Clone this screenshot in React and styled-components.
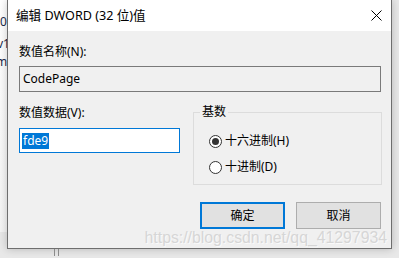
import React from "react"
import styled, { createGlobalStyle } from "styled-components"

const GlobalStyle = createGlobalStyle`
  html, body {
    margin: 0;
    padding: 0;
    background: #e8e8e8;
  }
  body {
    font-family: "Noto Sans", "Noto Sans CJK SC", sans-serif;
  }
`

const Page = styled.div`
  position: relative;
  width: 399px;
  height: 258px;
  overflow: hidden;
  display: flex;
  background: #e8e8e8;
`

// bit of the window behind the dialog
const BehindWindow = styled.div`
  width: 7px;
  height: 232px;
  flex: none;
  overflow: hidden;
  background: linear-gradient(#ffffff, #f4f4f4);
  font: 12px/16px "Noto Sans", sans-serif;
  color: #1b2a4a;
  padding-top: 14px;
  box-sizing: border-box;
  white-space: nowrap;
`

const BehindLine = styled.div`
  height: ${(p) => p.h || 18}px;
  margin-left: ${(p) => p.shift || 0}px;
`

const Column = styled.div`
  display: flex;
  flex-direction: column;
`

const Dialog = styled.div`
  width: 385px;
  box-sizing: border-box;
  border: 1px solid #6e6e6e;
  border-top: none;
  background: #f0f0f0;
  box-shadow: 0 0 8px rgba(0, 0, 0, 0.22);
  color: #000;
  font-size: 12px;
`

const TitleBar = styled.div`
  height: 31px;
  background: #fff;
  display: flex;
  align-items: center;
  justify-content: space-between;
  padding: 0 8px 0 8px;
`

const Title = styled.span`
  font-size: 12.6px;
  line-height: 16px;
  margin-top: 1px;
`

const CloseButton = styled.span`
  display: flex;
  width: 11px;
  height: 11px;
  margin-right: 1px;
`

const Body = styled.div`
  padding: 13px 9px 19px 11px;
`

const Label = styled.div`
  line-height: 16px;
  margin-bottom: ${(p) => p.gap || 6}px;
`

const TextBox = styled.div`
  box-sizing: border-box;
  width: ${(p) => p.w}px;
  height: ${(p) => p.h}px;
  border: 1px solid ${(p) => (p.focused ? "#0078d7" : "#7a7a7a")};
  background: ${(p) => (p.focused ? "#fff" : "#f0f0f0")};
  display: flex;
  align-items: center;
  padding-left: 3px;
  line-height: 16px;
`

const Selected = styled.span`
  background: #0078d7;
  color: #fff;
  padding: 0 1px;
  margin-left: -1px;
  line-height: 16px;
`

const Row = styled.div`
  display: flex;
  align-items: flex-start;
  gap: 12px;
  margin-top: 12px;
`

const LeftCol = styled.div`
  width: 162px;
  padding-top: 1px;
`

const Group = styled.fieldset`
  margin: 0;
  width: 189px;
  box-sizing: border-box;
  border: 1px solid #dcdcdc;
  padding: 12px 8px 8px 6px;
`

const Legend = styled.legend`
  padding: 0 2px;
  line-height: 16px;
`

const RadioList = styled.div`
  display: flex;
  flex-direction: column;
  gap: 8px;
  padding-left: 9px;
`

const RadioRow = styled.label`
  display: flex;
  align-items: center;
  height: 18px;
  gap: 3px;
  line-height: 16px;
`

const RadioCircle = styled.span`
  width: 13px;
  height: 13px;
  box-sizing: border-box;
  border-radius: 50%;
  border: 1px solid #333;
  background: #fff;
  display: flex;
  align-items: center;
  justify-content: center;
  &::after {
    content: "";
    width: 7px;
    height: 7px;
    border-radius: 50%;
    background: ${(p) => (p.checked ? "#333" : "transparent")};
  }
`

const Buttons = styled.div`
  display: flex;
  justify-content: flex-end;
  gap: 11px;
  margin-top: 17px;
  margin-right: 1px;
`

const Button = styled.div`
  box-sizing: border-box;
  width: 85px;
  height: 27px;
  display: flex;
  align-items: center;
  justify-content: center;
  background: #e1e1e1;
  border: ${(p) => (p.primary ? "2px solid #0078d7" : "1px solid #adadad")};
  line-height: 16px;
`

const BottomStrip = styled.div`
  height: 7px;
  display: flex;
`

const WindowEdge = styled.div`
  margin-left: 47px;
  width: 3px;
  border-left: 1px solid #8a8a8a;
  border-right: 1px solid #8a8a8a;
`

const Watermark = styled.div`
  position: absolute;
  right: 12px;
  top: 229px;
  font: 15.8px/18px "Liberation Sans", Arial, sans-serif;
  color: #d6d6d6;
  text-shadow: 1px 1px 0 rgba(255, 255, 255, 0.7);
  pointer-events: none;
  white-space: nowrap;
`

const CloseIcon = () => (
  <svg width="11" height="11" viewBox="0 0 11 11">
    <path d="M0.5 0.5 L10.5 10.5 M10.5 0.5 L0.5 10.5" stroke="#000" strokeWidth="1" fill="none" />
  </svg>
)

const Radio = ({ checked, children }) => (
  <RadioRow>
    <RadioCircle checked={checked} />
    <span>{children}</span>
  </RadioRow>
)

export default function App() {
  return (
    <>
      <GlobalStyle />
      <Page>
        <BehindWindow>
          <BehindLine h={22}>0</BehindLine>
          <BehindLine h={18} shift={-3}>v1</BehindLine>
          <BehindLine h={18} shift={-4}>m</BehindLine>
        </BehindWindow>
        <Column>
          <Dialog>
            <TitleBar>
              <Title>编辑 DWORD (32 位)值</Title>
              <CloseButton>
                <CloseIcon />
              </CloseButton>
            </TitleBar>
            <Body>
              <Label>数值名称(N):</Label>
              <TextBox w={362} h={26}>CodePage</TextBox>
              <Row>
                <LeftCol>
                  <Label gap={7}>数值数据(V):</Label>
                  <TextBox w={161} h={25} focused>
                    <Selected>fde9</Selected>
                  </TextBox>
                </LeftCol>
                <Group>
                  <Legend>基数</Legend>
                  <RadioList>
                    <Radio checked>十六进制(H)</Radio>
                    <Radio>十进制(D)</Radio>
                  </RadioList>
                </Group>
              </Row>
              <Buttons>
                <Button primary>确定</Button>
                <Button>取消</Button>
              </Buttons>
            </Body>
          </Dialog>
          <BottomStrip>
            <WindowEdge />
          </BottomStrip>
        </Column>
        <Watermark>https://blog.csdn.net/qq_41297934</Watermark>
      </Page>
    </>
  )
}
